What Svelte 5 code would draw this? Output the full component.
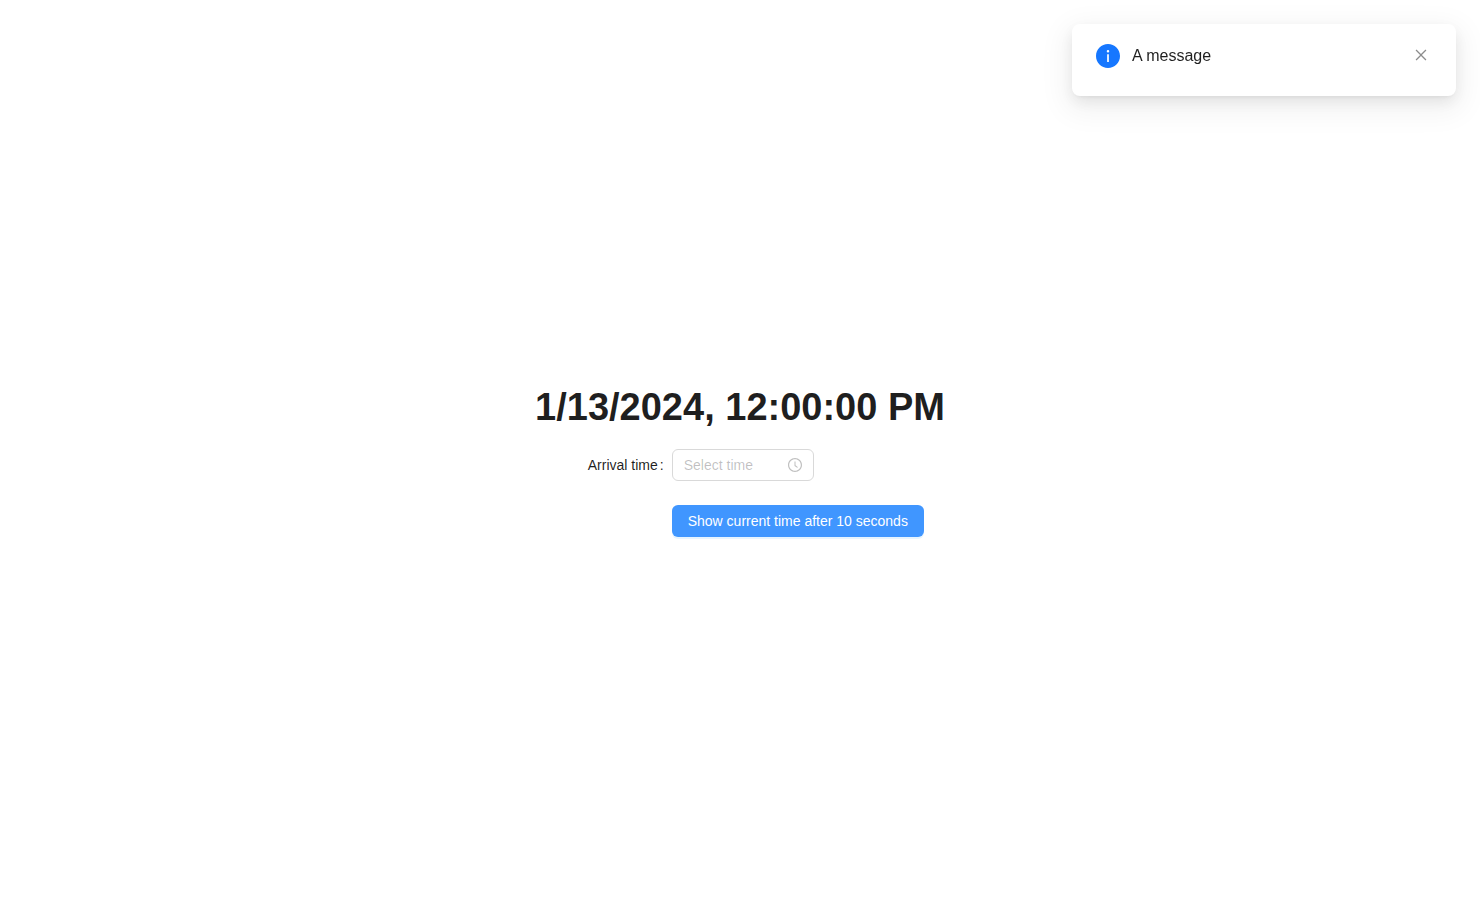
<script>
  let open = $state(true);
  let arrival = $state('');
  const now = '1/13/2024, 12:00:00 PM';
</script>

<main class="page">
  <div class="content">
    <h1>{now}</h1>
    <form onsubmit={(e) => e.preventDefault()}>
      <label for="arrival">Arrival time</label>
      <div class="picker">
        <input id="arrival" type="text" placeholder="Select time" autocomplete="off" bind:value={arrival} />
        <svg class="clock" viewBox="64 64 896 896" aria-hidden="true">
          <path d="M512 64C264.6 64 64 264.6 64 512s200.6 448 448 448 448-200.6 448-448S759.4 64 512 64zm0 820c-205.4 0-372-166.6-372-372s166.6-372 372-372 372 166.6 372 372-166.6 372-372 372z" />
          <path d="M686.7 638.6L544.1 535.5V288c0-4.4-3.6-8-8-8H488c-4.4 0-8 3.6-8 8v275.4c0 2.6 1.2 5 3.3 6.5l165.4 120.6c3.6 2.6 8.6 1.9 11.2-1.7l28.6-39c2.6-3.7 1.8-8.7-1.8-11.2z" />
        </svg>
      </div>
      <button class="submit" type="submit">Show current time after 10 seconds</button>
    </form>
  </div>
</main>

{#if open}
  <div class="notice" role="alert">
    <svg class="info" viewBox="64 64 896 896" aria-hidden="true">
      <path d="M512 64C264.6 64 64 264.6 64 512s200.6 448 448 448 448-200.6 448-448S759.4 64 512 64zm32 664c0 4.4-3.6 8-8 8h-48c-4.4 0-8-3.6-8-8V456c0-4.4 3.6-8 8-8h48c4.4 0 8 3.6 8 8v272zm-32-344a48.01 48.01 0 010-96 48.01 48.01 0 010 96z" />
    </svg>
    <div class="message">A message</div>
    <button class="close" type="button" aria-label="Close" onclick={() => (open = false)}>
      <svg viewBox="64 64 896 896" aria-hidden="true">
        <path d="M799.86 166.31c.02 0 .04.02.08.06l57.69 57.7c.04.03.05.05.06.08a.12.12 0 010 .06c0 .03-.02.05-.06.09L569.93 512l287.7 287.7c.04.04.05.06.06.09a.12.12 0 010 .07c0 .02-.02.04-.06.08l-57.7 57.69c-.03.04-.05.05-.07.06a.12.12 0 01-.07 0c-.03 0-.05-.02-.09-.06L512 569.93l-287.7 287.7c-.04.04-.06.05-.09.06a.12.12 0 01-.07 0c-.02 0-.04-.02-.08-.06l-57.69-57.7c-.04-.03-.05-.05-.06-.07a.12.12 0 010-.07c0-.03.02-.05.06-.09L454.07 512l-287.7-287.7c-.04-.04-.05-.06-.06-.09a.12.12 0 010-.07c0-.02.02-.04.06-.08l57.7-57.69c.03-.04.05-.05.07-.06a.12.12 0 01.07 0c.03 0 .05.02.09.06L512 454.07l287.7-287.7c.04-.04.06-.05.09-.06a.12.12 0 01.07 0z" />
      </svg>
    </button>
  </div>
{/if}

<style>
  :global(body) {
    margin: 0;
    background: #fff;
    color: rgba(0, 0, 0, 0.88);
    font: 14px/22px "Liberation Sans", Arial, sans-serif;
  }
  .page,
  .page *,
  .notice,
  .notice * {
    box-sizing: border-box;
  }
  .page {
    display: grid;
    place-content: center;
    min-height: 100vh;
  }
  h1 {
    margin: 0 0 19px;
    font-size: 38px;
    line-height: 46px;
    font-weight: 600;
  }
  form {
    display: grid;
    grid-template-columns: minmax(0, 1fr) minmax(0, 2fr);
    row-gap: 24px;
  }
  label {
    justify-self: end;
    align-self: center;
  }
  label::after {
    content: ":";
    margin: 0 8px 0 2px;
  }
  .picker {
    justify-self: start;
    display: flex;
    align-items: center;
    gap: 4px;
    height: 32px;
    padding: 4px 11px;
    border: 1px solid #d9d9d9;
    border-radius: 6px;
    background: #fff;
  }
  .picker:focus-within {
    border-color: #1677ff;
  }
  .picker input {
    width: 100px;
    padding: 0;
    border: 0;
    outline: 0;
    background: transparent;
    color: inherit;
    font: inherit;
  }
  .picker input::placeholder {
    color: rgba(0, 0, 0, 0.25);
    opacity: 1;
  }
  .clock {
    flex: none;
    width: 14px;
    height: 14px;
    fill: rgba(0, 0, 0, 0.25);
  }
  .submit {
    grid-column: 2;
    justify-self: start;
    height: 32px;
    padding: 4px 16px;
    border: 0;
    border-radius: 6px;
    background: #4096ff;
    box-shadow: 0 2px 0 rgba(5, 145, 255, 0.1);
    color: #fff;
    font: inherit;
    white-space: nowrap;
    cursor: pointer;
  }
  .notice {
    position: fixed;
    top: 24px;
    right: 24px;
    display: flex;
    align-items: flex-start;
    gap: 12px;
    width: 384px;
    max-width: calc(100vw - 48px);
    padding: 20px 24px 28px;
    border-radius: 8px;
    background: #fff;
    box-shadow:
      0 6px 16px 0 rgba(0, 0, 0, 0.08),
      0 3px 6px -4px rgba(0, 0, 0, 0.12),
      0 9px 28px 8px rgba(0, 0, 0, 0.05);
    will-change: transform;
  }
  .info {
    flex: none;
    width: 24px;
    height: 24px;
    fill: #1677ff;
  }
  .message {
    flex: 1;
    font-size: 16px;
    line-height: 24px;
  }
  .close {
    display: grid;
    place-content: center;
    width: 22px;
    height: 22px;
    padding: 0;
    border: 0;
    border-radius: 4px;
    background: transparent;
    cursor: pointer;
  }
  .close svg {
    width: 14px;
    height: 14px;
    fill: rgba(0, 0, 0, 0.45);
  }
</style>
